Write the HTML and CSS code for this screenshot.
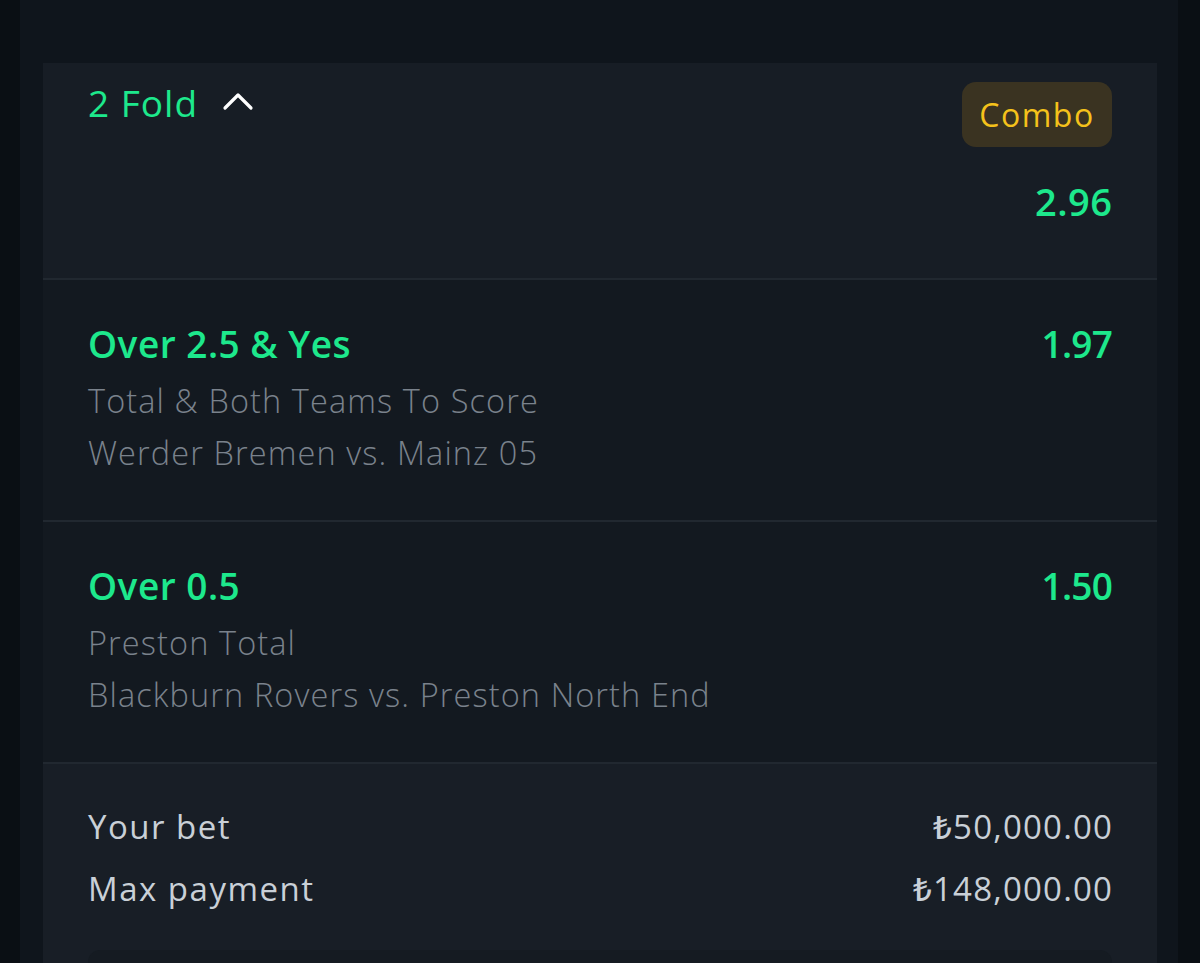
FILE: index.html
```html
<!DOCTYPE html>
<html>
<head>
<meta charset="utf-8">
<link rel="stylesheet" href="styles.css">
</head>
<body>
<div class="panel">
  <div class="card">
    <div class="header">
      <div class="head-row">
        <div class="fold">
          <span class="fold-text">2 Fold</span>
          <svg class="chev" width="32" height="20" viewBox="0 0 32 20"><path d="M3 17 L16 4 L29 17" fill="none" stroke="#ffffff" stroke-width="3.2" stroke-linecap="round" stroke-linejoin="round"/></svg>
        </div>
        <div class="badge">Combo</div>
      </div>
      <div class="total-odds"><span>2.96</span></div>
    </div>
    <div class="sel">
      <div class="sel-top"><span class="sel-name">Over 2.5 &amp; Yes</span><span class="sel-odds">1.97</span></div>
      <div class="sub">Total &amp; Both Teams To Score</div>
      <div class="sub">Werder Bremen vs. Mainz 05</div>
    </div>
    <div class="sel">
      <div class="sel-top"><span class="sel-name">Over 0.5</span><span class="sel-odds">1.50</span></div>
      <div class="sub">Preston Total</div>
      <div class="sub">Blackburn Rovers vs. Preston North End</div>
    </div>
    <div class="summary">
      <div class="sum-row"><span>Your bet</span><span class="amt">₺50,000.00</span></div>
      <div class="sum-row"><span>Max payment</span><span class="amt">₺148,000.00</span></div>
      <div class="input-box"></div>
    </div>
  </div>
</div>
</body>
</html>
```
FILE: styles.css
```css
html, body {
  margin: 0;
  padding: 0;
  background: #0a0f14;
  font-family: "Open Sans", "Noto Sans", sans-serif;
  height: 963px;
  overflow: hidden;
}
.panel {
  margin: 0 22px 0 20px;
  background: #0f151c;
  height: 963px;
  padding: 63px 21px 0 23px;
  box-sizing: border-box;
  overflow: hidden;
}
.card {
  display: flex;
  flex-direction: column;
}
.header {
  background: #171d25;
  padding: 19px 45px 53px 45px;
  border-bottom: 2px solid #212830;
}
.head-row {
  display: flex;
  justify-content: space-between;
  align-items: flex-start;
}
.fold {
  display: flex;
  align-items: center;
  gap: 24px;
  margin-top: -2px;
}
.fold-text {
  color: #1de88c;
  font-size: 37px;
  line-height: 46px;
  font-weight: 500;
  letter-spacing: 1px;
}
.chev { display: block; margin-top: -4px; }
.badge {
  background: #3a3321;
  color: #f5c21b;
  font-size: 32px;
  font-weight: 500;
  letter-spacing: 1.5px;
  width: 150px;
  height: 65px;
  border-radius: 14px;
  display: flex;
  align-items: center;
  justify-content: center;
}
.total-odds {
  display: flex;
  justify-content: flex-end;
  color: #1de88c;
  font-size: 38px;
  font-weight: 600;
  line-height: 48px;
  margin-top: 30px;
  letter-spacing: 0.5px;
}
.total-odds span { margin-right: -0.5px; }
.sel {
  background: #131920;
  padding: 41px 45px 41px 45px;
  border-bottom: 2px solid #212830;
}
.sel-top {
  display: flex;
  justify-content: space-between;
  color: #1de88c;
  font-size: 37px;
  font-weight: 600;
  line-height: 46px;
  margin-bottom: 8px;
}
.sel-name { letter-spacing: 0.5px; }
.sel-odds { letter-spacing: -0.8px; }
.sub {
  color: #7a828c;
  font-size: 32.5px;
  font-weight: 300;
  line-height: 52px;
  letter-spacing: 1.1px;
}
.summary {
  background: #181e26;
  padding: 32px 45px 0 45px;
  flex: 1;
}
.sum-row {
  display: flex;
  justify-content: space-between;
  color: #c9d0d7;
  font-size: 33px;
  font-weight: 500;
  line-height: 62px;
  letter-spacing: 1.5px;
}
.amt { letter-spacing: 1.2px; margin-right: -1.2px; }
.input-box {
  margin-top: 30px;
  height: 30px;
  border-radius: 12px 12px 0 0;
  background: #151b22;
}
```
